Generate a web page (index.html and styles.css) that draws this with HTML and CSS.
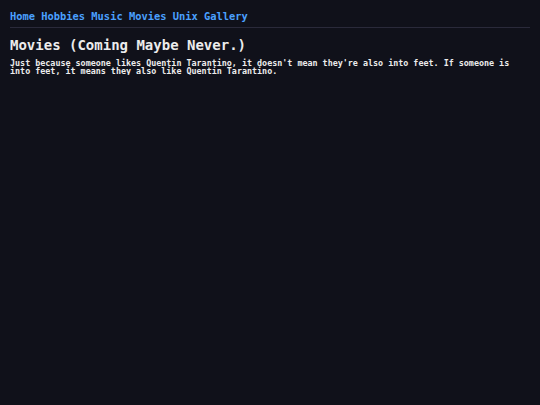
FILE: index.html
```html
<!DOCTYPE html>
<html lang="en">
<head>
    <meta charset="UTF-8">
    <meta name="viewport" content="width=device-width, initial-scale=1.0">
    <title>Movies</title>
    <link rel="stylesheet" href="styles.css">
</head>
<body>
    <nav class="nav">
        <a href="#">Home</a>
        <a href="#">Hobbies</a>
        <a href="#">Music</a>
        <a href="#">Movies</a>
        <a href="#">Unix</a>
        <a href="#">Gallery</a>
    </nav>
    <main class="content">
        <h1>Movies (Coming Maybe Never.)</h1>
        <p>Just because someone likes Quentin Tarantino, it doesn't mean they're also into feet. If someone is into feet, it means they also like Quentin Tarantino.</p>
    </main>
</body>
</html>
```

FILE: styles.css
```css
body {
    margin: 0;
    padding: 0 10px;
    background-color: #10111a;
    color: #ececec;
    font-family: "DejaVu Sans Mono", "Liberation Mono", monospace;
    font-weight: bold;
}

.nav {
    padding: 11px 0 5px;
    border-bottom: 1px solid #2a2a3a;
    font-size: 10.4px;
    line-height: 11px;
}

.nav a {
    color: #4aa0ff;
    text-decoration: none;
}

.content h1 {
    font-size: 14px;
    line-height: 14px;
    margin: 10px 0 7px;
}

.content p {
    font-size: 8.4px;
    line-height: 8px;
    margin: 0;
}
```
